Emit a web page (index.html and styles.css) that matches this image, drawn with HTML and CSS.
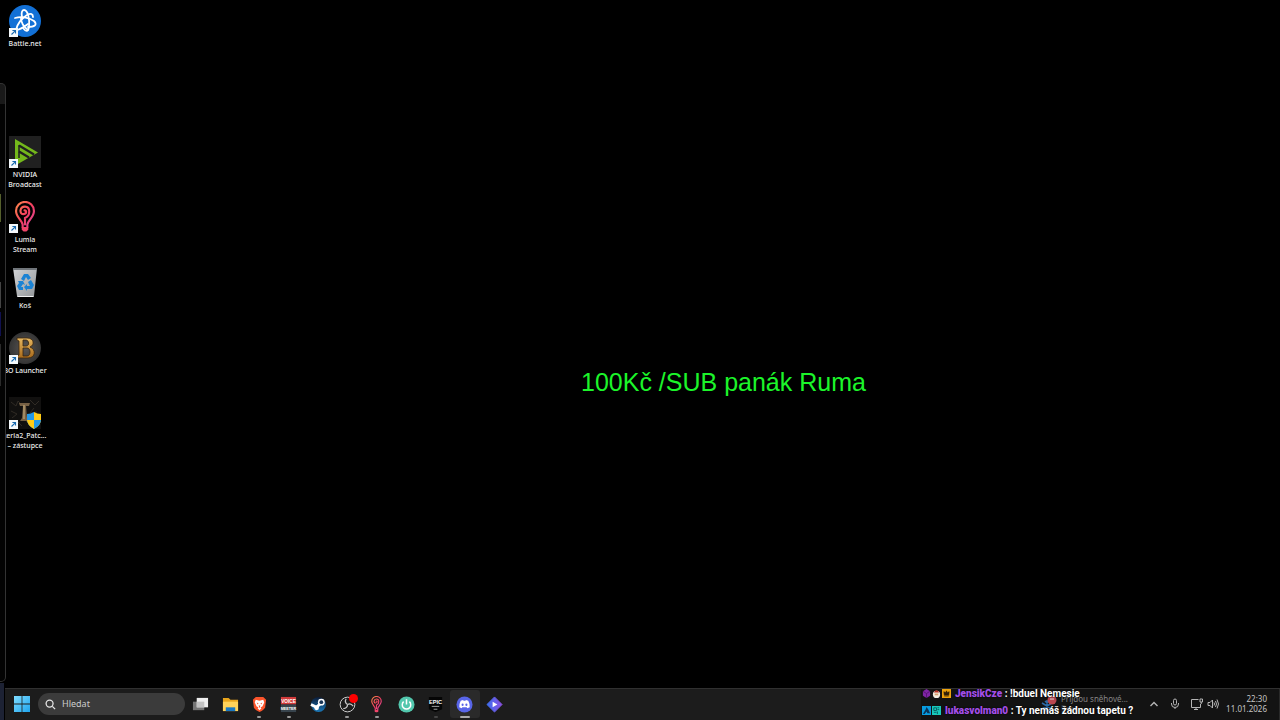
FILE: index.html
```html
<!DOCTYPE html>
<html lang="cs">
<head>
<meta charset="utf-8">
<title>Plocha</title>
<link rel="stylesheet" href="styles.css">
</head>
<body>
<svg class="defs" aria-hidden="true">
  <defs>
    <linearGradient id="lumia" x1="0" y1="0" x2="1" y2="1"><stop offset="0" stop-color="#ff8a4c"/><stop offset=".5" stop-color="#f43f5e"/><stop offset="1" stop-color="#d946a0"/></linearGradient>
    <linearGradient id="win" x1="0" y1="0" x2="1" y2="1"><stop offset="0" stop-color="#7fdcff"/><stop offset="1" stop-color="#1fa5ee"/></linearGradient>
    <linearGradient id="gold" x1="0" y1="0" x2="0" y2="1"><stop offset="0" stop-color="#e8b860"/><stop offset="1" stop-color="#a86a1c"/></linearGradient>
    <linearGradient id="bin" x1="0" y1="0" x2="1" y2="1"><stop offset="0" stop-color="#d4d6d8"/><stop offset="1" stop-color="#929598"/></linearGradient>
    <linearGradient id="steam" x1="0" y1="0" x2="0" y2="1"><stop offset="0" stop-color="#0c1c38"/><stop offset="1" stop-color="#1a78b8"/></linearGradient>
    <linearGradient id="dia" x1="0" y1="0" x2="1" y2="0"><stop offset="0" stop-color="#3d6ff0"/><stop offset="1" stop-color="#8a4fe0"/></linearGradient>
    <radialGradient id="disc"><stop offset="0" stop-color="#5a5654"/><stop offset="1" stop-color="#343434"/></radialGradient>
    <symbol id="shortcut" viewBox="0 0 9 9"><rect width="9" height="9" fill="#f4f8fb"/><path d="M2.500 6.500 6.200 2.800M3.400 2.500h3.100v3.100" fill="none" stroke="#1769b0" stroke-width="1.100"/></symbol>
    <symbol id="bulb" viewBox="0 0 24 34">
      <path d="M9.500 28V25C8.500 20 2.500 17 2.500 10.500a9.500 9.500 0 0 1 19 0C21.500 17 15.500 20 14.500 25v3M12 25V18C18 16 18 6 12 6 6 6 6 14 10 14c4 0 4-4 1.500-4" fill="none" stroke="url(#lumia)" stroke-width="2.300" stroke-linecap="round"/>
      <path d="M8.500 27.500h7v3l-2 2h-3l-2-2z" fill="#f0446a"/>
    </symbol>
  </defs>
</svg>

<main class="desktop">
  <div class="edge" aria-hidden="true"><i class="mark olive"></i><i class="mark grey"></i><i class="mark blue"></i><i class="mark dim"></i></div>
  <nav class="icons" aria-label="Plocha">
    <a class="icon" href="#">
      <svg class="art" viewBox="0 0 32 32"><circle cx="16" cy="16" r="16" fill="#1270d6"/>
        <g fill="none" stroke="#fff" stroke-width="1.800" stroke-linecap="round"><path d="M13 12c-1-4 0-7 2-7 4 0 6 10 5 17-1 5-3 5-6 1"/><path d="M6 13c7-2 15 0 19 3 4 4 0 6-6 6"/><path d="M7 25c1-6 6-12 11-15 4-2 6-1 6 2"/><path d="M12 13c0 4 3 9 7 12M7 25c4 0 8-3 12-6"/></g>
      </svg><svg class="arrow"><use href="#shortcut"/></svg><span>Battle.net</span></a>
    <div></div>
    <a class="icon" href="#">
      <svg class="art" viewBox="0 0 32 32"><rect width="32" height="32" fill="#202020"/><path d="M6 3 29 16.500 8 28.500H6z" fill="#74b81b"/><path d="M10 9v13" stroke="#202020" stroke-width="1.500"/><path d="M10 9.500 25 18.500M10 15.500l10 6" stroke="#202020" stroke-width="2.200"/></svg>
      <svg class="arrow"><use href="#shortcut"/></svg><span>NVIDIA Broadcast</span></a>
    <a class="icon" href="#">
      <svg class="art"><use href="#bulb"/></svg><svg class="arrow"><use href="#shortcut"/></svg><span>Lumia<br>Stream</span></a>
    <a class="icon" href="#">
      <svg class="art" viewBox="0 0 32 32"><path d="M4 1h24l-3 28q0 1-1 1H9q-1 0-1-1z" fill="url(#bin)"/><path d="M4 1h24v2H4z" fill="#70757a"/><path d="M8 29h17l-1 1H9z" fill="#f0f0f0"/>
        <g fill="#1b83d4"><path d="m12 12 3-5h4l3 4-3 2-2-3-2 4z"/><path d="m22 13 3 5-2 4h-5v2l-3-4 3-3v2h3l-2-4z"/><path d="M9 14h5l2 4-2-1-2 3h2v3h-4l-2-4 2-3z"/></g></svg><span>Koš</span></a>
    <a class="icon" href="#">
      <svg class="art" viewBox="0 0 32 32"><circle cx="16" cy="16" r="16" fill="url(#disc)"/><path fill-rule="evenodd" d="M8 6h10c7 0 8 7 3 9 6 2 6 11-2 11H8v-2l2-1V9L8 8zm6 2v6h3c4 0 3-6 0-6zm0 8v8h4c4 0 4-8 0-8z" fill="url(#gold)" stroke="#38240d" stroke-width=".8"/></svg>
      <svg class="arrow"><use href="#shortcut"/></svg><span class="wide">BO Launcher</span></a>
    <a class="icon" href="#">
      <svg class="art" viewBox="0 0 32 32"><rect width="32" height="32" fill="#11100f"/><g fill="none" stroke="#302b25" stroke-width="1"><path d="m2 5 5 4 2-5 4 4M21 3l5 5 4-4M2 14l6 3-5 4M25 11l-4 5 7-1M21 27l-4-3M8 24l5 5"/></g><path d="M10 6h11l-1 3h-3l1 12 3 3H11l2-3 1-12h-3z" fill="#766044"/><path d="M14 8h2v14h-2z" fill="#a28a62"/>
        <path d="M25 15q3 2 7 2v6q0 5-7 9z" fill="#ffcb16"/><path d="M25 15q-3 2-7 2v6q0 5 7 9z" fill="#2398e7"/><path d="M18 23h7v9q-7-4-7-9" fill="#ffcb16"/><path d="M25 23h7q0 5-7 9z" fill="#2398e7"/></svg>
      <svg class="arrow"><use href="#shortcut"/></svg><span class="wide">teria2_Patc...<br>– zástupce</span></a>
  </nav>
  <p class="banner">100Kč /SUB panák Ruma</p>
</main>

<footer class="taskbar">
  <button class="start" aria-label="Start"><svg viewBox="0 0 16 16"><path d="M0 0h7.600v7.600H0zM8.400 0H16v7.600H8.400zM0 8.400h7.600V16H0zM8.400 8.400H16V16H8.400z" fill="url(#win)"/></svg></button>
  <label class="search"><svg viewBox="0 0 12 12"><circle cx="5" cy="5" r="3.800"/><path d="m8 8 3 3"/></svg><input type="text" placeholder="Hledat" aria-label="Hledat"></label>
  <div class="apps">
    <button aria-label="Zobrazení úloh"><svg viewBox="0 0 18 18"><path d="M1 6h12v9H1z" fill="#757575"/><path d="M5 2h12v10H5z" fill="#eee"/><path d="M5 6h8v6H5z" fill="#c2c2c2"/></svg></button>
    <button aria-label="Průzkumník"><svg viewBox="0 0 18 18"><path d="M1 2h6l2 2h8v12H1z" fill="#e9a51c"/><path d="M1 6h16v10H1z" fill="#ffd35a"/><path d="M4 12h10v4H4z" fill="#1979c4"/></svg></button>
    <button class="running" aria-label="Brave"><svg viewBox="0 0 18 18"><path d="m5 1-3 3 1 8q1 3 6 5 5-2 6-5l1-8-3-3z" fill="#fb542b"/><path d="m5 4 4 1 4-1 1 3-2 4-2 1 1 1-2 2-2-2 1-1-2-1-2-4z" fill="#fff"/><path d="m6 7 2 1-1 1zM12 7l-2 1 1 1zM8 10h2l-1 3z" fill="#fb542b"/></svg></button>
    <button class="running" aria-label="Voicemeeter"><svg viewBox="0 0 18 18"><path d="M1 1h16v8H1z" fill="#d23b3b"/><path d="M1 9h16v8H1z" fill="#37434c"/><text x="9" y="7" class="logo-text">VOICE</text><text x="9" y="15" class="logo-text small">MEETER</text></svg></button>
    <button aria-label="Steam"><svg viewBox="0 0 18 18"><circle cx="9" cy="9" r="8" fill="url(#steam)"/><path d="m1 9 6 3 4-4" stroke="#fff" stroke-width="3" fill="none"/><circle cx="12" cy="6.500" r="3.600" fill="#fff"/><circle cx="12" cy="6.500" r="2" fill="#183557"/><circle cx="7" cy="12.500" r="2.500" fill="#fff"/></svg></button>
    <button class="running" aria-label="OBS"><svg viewBox="0 0 18 18"><circle cx="9" cy="9" r="7.800" fill="#1c1c1c" stroke="#d5d5d5"/><g fill="none" stroke="#c8c8c8" stroke-width="1.300"><path id="blade" d="M9 9Q5.500 7 7.500 3"/><path d="M9 9Q5.500 7 7.500 3" transform="rotate(120 9 9)"/><path d="M9 9Q5.500 7 7.500 3" transform="rotate(240 9 9)"/></g></svg><i class="rec"></i></button>
    <button class="running" aria-label="Lumia Stream"><svg><use href="#bulb"/></svg></button>
    <button aria-label="Napájení"><svg viewBox="0 0 18 18"><circle cx="9" cy="9" r="8.500" fill="#52c7ad"/><path d="M6 6a4.500 4.500 0 1 0 6 0M9 3.500V9" fill="none" stroke="#fff" stroke-width="1.600"/></svg></button>
    <button class="running dimmed" aria-label="Epic Games"><svg viewBox="0 0 18 18"><path d="M2 1h14v13l-7 3-7-3z" fill="#050505"/><text x="9" y="8" class="epic">EPIC</text><path d="M5 11h8M7 14h4" stroke="#aaa" stroke-width="1"/></svg></button>
    <button class="active" aria-label="Discord"><svg viewBox="0 0 18 18"><circle cx="9" cy="9" r="8.500" fill="#5865e8"/><path d="m5 5 2.500-.8.500.8h2l.5-.8L13 5q2 4 1.500 7L12 13l-.7-1H6.700L6 13l-2.500-1Q3 9 5 5" fill="#fff"/><ellipse cx="7" cy="9.300" rx="1.100" ry="1.300" fill="#5865e8"/><ellipse cx="11" cy="9.300" rx="1.100" ry="1.300" fill="#5865e8"/></svg></button>
    <button aria-label="Přehrávač"><svg viewBox="0 0 18 18"><path d="m9 1 8 8-8 8-8-8z" fill="url(#dia)" stroke="url(#dia)" stroke-linejoin="round"/><path d="m7 6 5 3-5 3z" fill="#fff"/></svg></button>
  </div>

  <div class="tray">
    <button class="weather"><svg viewBox="0 0 16 16"><g stroke="#2b6ba8" stroke-width="1.500"><path d="M6 4v12M1 7l10 6M1 13l10-6M4 5l2 2 2-2M4 15l2-2 2 2"/></g><circle cx="11" cy="4" r="4.500" fill="#b94750"/><path d="M9 3h4" stroke="#ddd"/></svg><span>Přijdou sněhové...<br><small>Brzy</small></span></button>
    <button class="chevron" aria-label="Skryté ikony"><svg viewBox="0 0 12 12"><path d="m2.500 8 3.500-3.500L9.500 8"/></svg></button>
    <button aria-label="Mikrofon"><svg viewBox="0 0 12 12"><rect x="4.500" y="1" width="3" height="6" rx="1.500"/><path d="M2.500 5v1a3.500 3.500 0 0 0 7 0V5M6 9.500V11"/></svg></button>
    <button class="net" aria-label="Síť"><svg viewBox="0 0 12 12"><path d="M7.500 1.500h-7v8h9V6M3 11.500h4M5 9.500v2"/><path d="M9 1h2.500v3H9zM10.200 4v2"/></svg></button>
    <button class="volume" aria-label="Hlasitost"><svg viewBox="0 0 12 12"><path d="M1 4.500h2L5.500 2v8L3 7.500H1zM7 4.500q1 1.500 0 3M8.500 3q2 3 0 6M10 1.500q3 4.500 0 9"/></svg></button>
    <time class="clock" datetime="2026-01-11T22:30">22:30<br>11.01.2026</time>
  </div>

  <section class="chat" aria-label="Chat">
    <p><svg viewBox="0 0 10 10"><path d="m5 0 4 2.500v5L5 10 1 7.500v-5z" fill="#7f25a5"/><path d="m1 2.500 4 2.500 4-2.500M5 5v5" stroke="#561370" fill="none"/></svg><svg viewBox="0 0 10 10"><circle cx="5" cy="6" r="4" fill="#f4eee2"/><path d="M2 4q3-5 6 0" fill="#b52d20"/><path d="M3 5h4v2H3z" fill="#d7a171"/></svg><svg viewBox="0 0 10 10"><path d="M0 0h10v10H0z" fill="#eda20d"/><path d="m2 3 2 1 1-2 1 2 2-1-.500 4h-5zM2.500 8h5" fill="#302008" stroke="#302008" stroke-width=".6"/></svg><b>JensikCze</b> : !bduel Nemesie</p>
    <p><svg viewBox="0 0 10 10"><path d="M0 0h10v10H0z" fill="#079bdf"/><path d="m5 1 2 3 2 4H6L5 6 3 9H1l3-5z" fill="#0a3458"/></svg><svg viewBox="0 0 10 10"><path d="M0 0h10v10H0z" fill="#18c9bb"/><path d="M2 2h3v3H2zM6 2h2M6 4h2M2 7h3M6 6v3" fill="none" stroke="#075c60"/></svg><b>lukasvolman0</b> : Ty nemáš žádnou tapetu ?</p>
  </section>
</footer>
</body>
</html>
```
FILE: styles.css
```css
* { box-sizing: border-box; }
body {
  margin: 0;
  min-height: 100vh;
  display: grid;
  grid-template-rows: 1fr auto;
  background: #000;
  color: #fff;
  font-family: "Noto Sans", "Open Sans", sans-serif;
}
.defs { position: absolute; width: 0; height: 0; }
p { margin: 0; }
button { border: 0; padding: 0; background: none; color: inherit; font: inherit; position: relative; }

.desktop { display: flex; align-items: flex-start; position: relative; }
.edge {
  align-self: stretch;
  width: 6px;
  margin: 83px 0 6px;
  border: 1px solid #333;
  border-left: 0;
  border-radius: 0 5px 5px 0;
  background: linear-gradient(#191919 20px, #030303 20px);
  position: relative;
}
.mark { position: absolute; left: 0; width: 1px; }
.olive { top: 110px; height: 28px; background: #55602c; }
.grey { top: 198px; height: 26px; background: #444; }
.blue { top: 228px; height: 24px; background: #101050; }
.dim { top: 260px; height: 42px; background: #2a2a2a; }

.icons {
  display: grid;
  grid-template-rows: 65px 66px 65px 66px 65px 65px 65px;
  width: 44px;
  padding-top: 5px;
  overflow: hidden;
}
.icon {
  position: relative;
  display: flex;
  flex-direction: column;
  align-items: center;
  width: 38px;
  gap: 2px;
  color: #eee;
  text-decoration: none;
  text-align: center;
  font-size: 7px;
  line-height: 10px;
  font-weight: 500;
}
.art { width: 32px; height: 32px; flex: none; }
.arrow { position: absolute; left: 3px; top: 23px; width: 9px; height: 9px; }
.wide { white-space: nowrap; }

.banner {
  position: absolute;
  left: 581px;
  top: 367px;
  color: #1cf52a;
  font: 25px/30px "Liberation Sans", Arial, sans-serif;
}

.taskbar {
  position: relative;
  display: flex;
  align-items: center;
  height: 32px;
  margin-left: 5px;
  padding-bottom: 1px;
  border-top: 1px solid #303030;
  background: #1c1c1c;
}
.taskbar::before {
  content: "";
  position: absolute;
  left: -5px;
  top: -6px;
  bottom: 0;
  width: 4px;
  background: #1d2234;
}
.start { width: 33px; height: 30px; display: grid; place-items: center; }
.start svg { width: 16px; height: 16px; }
.search {
  display: flex;
  align-items: center;
  gap: 6px;
  width: 147px;
  height: 22px;
  padding: 0 7px;
  border-radius: 11px;
  background: #3b3b3b;
}
.search svg { width: 11px; height: 11px; flex: none; fill: none; stroke: #e6e6e6; stroke-width: 1.400; }
.search input {
  width: 100%;
  border: 0;
  padding: 0;
  background: none;
  color: #fff;
  outline: 0;
  font: 9px/12px "Noto Sans", sans-serif;
}
.search input::placeholder { color: #ccc; opacity: 1; }
.apps { display: flex; width: 323px; margin-left: 1px; }
.apps button { flex: 1; height: 28px; display: grid; place-items: center; border-radius: 3px; }
.apps svg { width: 17px; height: 17px; }
.logo-text { font: bold 5px "Liberation Sans", sans-serif; fill: #fff; text-anchor: middle; }
.small { font-size: 4px; }
.epic { font: bold 6px "Liberation Sans", sans-serif; fill: #fff; text-anchor: middle; }
.running::after, .active::after {
  content: "";
  position: absolute;
  bottom: 0;
  left: 50%;
  width: 4px;
  height: 2px;
  margin-left: -2px;
  border-radius: 1px;
  background: #999;
}
.dimmed::after { background: #444; }
.apps .active { background: #2a2a2a; }
.active::after { width: 10px; margin-left: -5px; background: #aaa; }
.rec { position: absolute; right: 4px; top: 4px; width: 9px; height: 9px; border-radius: 50%; background: #f00; }

.tray {
  display: flex;
  align-items: center;
  align-self: stretch;
  width: 359px;
  margin: 0 0 -1px auto;
  padding: 0 12px 2px 120px;
  border-right: 1px solid #292929;
  background: #131313;
  color: #c4c4c4;
}
.tray svg { width: 12px; height: 12px; display: block; fill: none; stroke: #b5b5b5; stroke-width: 1; }
.weather { display: flex; align-items: center; gap: 4px; width: 106px; text-align: left; font-size: 8px; line-height: 10px; color: #858585; white-space: nowrap; }
.tray .weather svg { width: 16px; height: 16px; stroke: none; }
.weather small { font-size: 8px; color: #444; }
.chevron { margin: 0 9px 0 1px; }
.tray .chevron svg { stroke-width: 1.400; }
.net { margin: 0 4px 0 10px; }
.clock { margin-left: auto; text-align: right; font-size: 8px; line-height: 10px; }

.chat {
  position: absolute;
  right: 145px;
  top: -4px;
  width: 213px;
  font: bold 10px/17px Roboto, sans-serif;
  white-space: nowrap;
  text-shadow: 0 0 2px #000;
}
.chat p { display: flex; align-items: center; white-space: pre; }
.chat svg { width: 9px; height: 9px; margin-right: 1px; }
.chat b { color: #a34ee8; margin-left: 3px; }
```
